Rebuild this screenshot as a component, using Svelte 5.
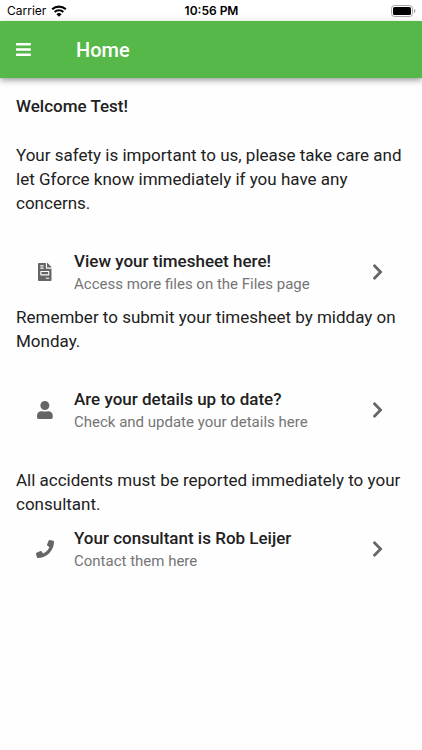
<script>
    const user = 'Test'
    const consultant = 'Rob Leijer'

    const fileIcon = {
        width: 384,
        path: 'M288 256H96v64h192v-64zm89-151L279.1 7c-4.5-4.5-10.6-7-17-7H256v128h128v-6.1c0-6.3-2.5-12.4-7-16.9zm-153 31V0H24C10.7 0 0 10.7 0 24v464c0 13.3 10.7 24 24 24h336c13.3 0 24-10.7 24-24V160H248c-13.2 0-24-10.8-24-24zM64 72c0-4.42 3.58-8 8-8h80c4.42 0 8 3.58 8 8v16c0 4.42-3.58 8-8 8H72c-4.42 0-8-3.58-8-8V72zm0 64c0-4.42 3.58-8 8-8h80c4.42 0 8 3.58 8 8v16c0 4.42-3.58 8-8 8H72c-4.42 0-8-3.58-8-8v-16zm256 304c0 4.42-3.58 8-8 8h-80c-4.42 0-8-3.58-8-8v-16c0-4.42 3.58-8 8-8h80c4.42 0 8 3.58 8 8v16zm0-200v96c0 8.84-7.16 16-16 16H80c-8.84 0-16-7.16-16-16v-96c0-8.84 7.16-16 16-16h224c8.84 0 16 7.16 16 16z'
    }
    const userIcon = {
        width: 448,
        path: 'M224 256c70.7 0 128-57.3 128-128S294.7 0 224 0 96 57.3 96 128s57.3 128 128 128zm96 32c-28 0-50 14-96 14s-68-14-96-14C48 288 0 340 0 410v54c0 26.500 21.500 48 48 48h352c26.500 0 48-21.500 48-48v-54c0-70-48-122-128-122z'
    }
    const phoneIcon = {
        width: 512,
        path: 'M493.4 24.6l-104-24c-11.3-2.6-22.9 3.3-27.5 13.9l-48 112c-4.2 9.8-1.4 21.3 6.9 28l60.6 49.6c-36 76.7-98.9 140.5-177.2 177.2l-49.6-60.6c-6.8-8.3-18.2-11.1-28-6.9l-112 48C3.9 366.5-2 378.1.6 389.4l24 104C27.1 504.2 36.7 512 48 512c256.1 0 464-207.5 464-464 0-11.2-7.7-20.9-18.6-23.4z'
    }
</script>

{#snippet row(icon, title, text)}
    <a class="row" href="#/">
        <span class="row-icon">
            <svg viewBox={`0 0 ${icon.width} 512`} aria-hidden="true"><path d={icon.path} /></svg>
        </span>
        <span class="row-text">
            <span class="row-title">{title}</span>
            <span class="row-sub">{text}</span>
        </span>
        <svg class="chevron" viewBox="0 0 320 512" aria-hidden="true">
            <path d="M285.476 272.971L91.132 467.314c-9.373 9.373-24.569 9.373-33.941 0l-22.667-22.667c-9.357-9.357-9.375-24.522-.04-33.901L188.505 256 34.484 101.255c-9.335-9.379-9.317-24.544.04-33.901l22.667-22.667c9.373-9.373 24.569-9.373 33.941 0L285.475 239.03c9.373 9.372 9.373 24.568.001 33.941z" />
        </svg>
    </a>
{/snippet}

<div class="status">
    <div class="carrier">
        Carrier
        <svg width="16" height="12" viewBox="0 0 16 12" aria-hidden="true">
            <path d="M1.200 4.300a9.800 9.800 0 0 1 13.600 0M3.700 7a6.200 6.200 0 0 1 8.600 0" fill="none" stroke="#000" stroke-width="2.200" />
            <path d="M8 11.800L5.400 9.200a3.700 3.700 0 0 1 5.200 0z" />
        </svg>
    </div>
    <div class="time">10:56 PM</div>
    <div class="battery">
        <svg width="25" height="12" viewBox="0 0 25 12" aria-hidden="true">
            <rect x="0.500" y="0.500" width="21" height="11" rx="3" fill="none" stroke="#a6a6a6" />
            <rect x="2" y="2" width="18" height="8" rx="1.600" />
            <path d="M23 4v4c.9-.3 1.400-1.100 1.400-2S23.900 4.300 23 4z" fill="#a6a6a6" />
        </svg>
    </div>
</div>

<header>
    <button class="menu" aria-label="Menu">
        <svg viewBox="0 0 448 512" aria-hidden="true">
            <path d="M16 132h416c8.837 0 16-7.163 16-16V76c0-8.837-7.163-16-16-16H16C7.163 60 0 67.163 0 76v40c0 8.837 7.163 16 16 16zm0 160h416c8.837 0 16-7.163 16-16v-40c0-8.837-7.163-16-16-16H16c-8.837 0-16 7.163-16 16v40c0 8.837 7.163 16 16 16zm0 160h416c8.837 0 16-7.163 16-16v-40c0-8.837-7.163-16-16-16H16c-8.837 0-16 7.163-16 16v40c0 8.837 7.163 16 16 16z" />
        </svg>
    </button>
    <h1>Home</h1>
</header>

<main>
    <h2>Welcome {user}!</h2>
    <p class="gap">Your safety is important to us, please take care and let Gforce know immediately if you have any concerns.</p>
    <div class="row-gap">
        {@render row(fileIcon, 'View your timesheet here!', 'Access more files on the Files page')}
    </div>
    <p>Remember to submit your timesheet by midday on Monday.</p>
    <div class="row-gap">
        {@render row(userIcon, 'Are your details up to date?', 'Check and update your details here')}
    </div>
    <p class="gap">All accidents must be reported immediately to your consultant.</p>
    {@render row(phoneIcon, `Your consultant is ${consultant}`, 'Contact them here')}
</main>

<style>
    :global(body) {
        background: #fefefe;
        color: #212121;
        font-family: Roboto, "Liberation Sans", sans-serif;
    }
    .status {
        display: grid;
        grid-template-columns: 1fr auto 1fr;
        align-items: center;
        height: 21px;
        padding: 0 6px 0 7px;
        background: #fff;
        color: #000;
        font-family: Inter, "Liberation Sans", sans-serif;
        font-size: 12px;
    }
    .carrier {
        display: flex;
        align-items: center;
        gap: 5px;
    }
    .time {
        font-weight: 600;
    }
    .battery {
        display: flex;
        justify-content: flex-end;
    }
    header {
        display: flex;
        align-items: center;
        height: 57px;
        padding: 0 16px;
        background: #55b848;
        color: #fff;
        box-shadow: 0 2px 4px -1px rgba(0, 0, 0, 0.2), 0 4px 5px rgba(0, 0, 0, 0.14), 0 1px 10px rgba(0, 0, 0, 0.12);
    }
    .menu {
        display: flex;
        width: 60px;
        padding: 0;
        border: 0;
        background: none;
        cursor: pointer;
    }
    .menu svg {
        height: 17px;
        fill: #fff;
    }
    h1 {
        margin: 0;
        font-size: 20px;
        font-weight: 500;
    }
    main {
        padding: 16px;
    }
    h2, p {
        margin: 0;
        font-size: 17px;
        font-weight: 400;
        line-height: 24px;
    }
    h2 {
        font-weight: 500;
    }
    .gap {
        margin-top: 25px;
    }
    .row-gap {
        margin-top: 24px;
    }
    .row {
        display: flex;
        align-items: center;
        padding: 10px 16px;
        color: inherit;
        text-decoration: none;
    }
    .row-icon {
        display: flex;
        justify-content: center;
        width: 26px;
        margin-right: 16px;
    }
    .row svg {
        height: 18px;
        fill: #666;
    }
    .row-text {
        flex: 1;
        display: flex;
        flex-direction: column;
    }
    .row-title {
        font-size: 17px;
        font-weight: 500;
        line-height: 24px;
    }
    .row-sub {
        color: #757575;
        font-size: 15px;
        line-height: 22px;
    }
    .row .chevron {
        margin-right: 7px;
    }
</style>
